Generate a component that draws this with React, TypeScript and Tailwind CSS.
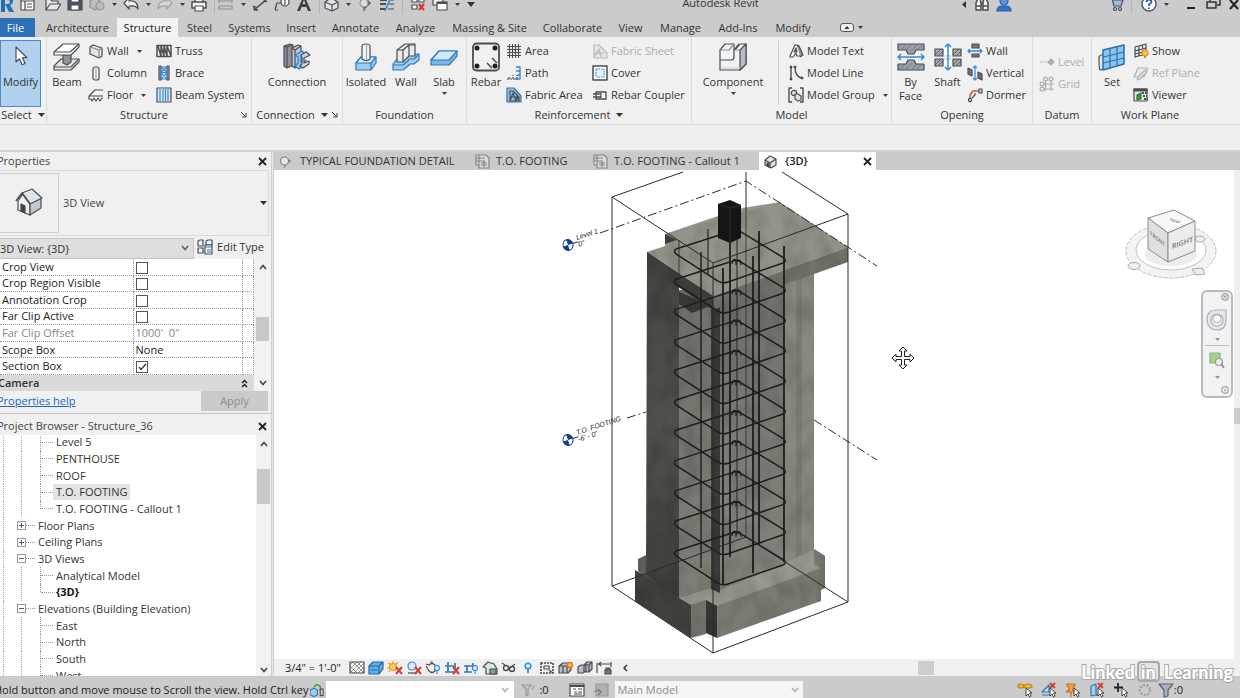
import React, { useState } from 'react';

type IconProps = { w?: number; h?: number; box?: string; children: React.ReactNode };

const Icon: React.FC<IconProps> = ({ w = 16, h = 16, box, children }) => (
  <svg width={w} height={h} viewBox={box ?? `0 0 ${w} ${h}`} fill="none" stroke="#4a4d52" strokeWidth="1.2" strokeLinejoin="round" className="shrink-0" aria-hidden="true">
    {children}
  </svg>
);

const Caret: React.FC<{ className?: string }> = ({ className = '' }) => (
  <svg width="5" height="3" viewBox="0 0 5 3" className={`shrink-0 ${className}`} aria-hidden="true">
    <path d="M0 0h5L2.500 3z" fill="#3c3c3c" />
  </svg>
);

/* ---------- large ribbon icons (30 x 30) ---------- */

const icons = {
  modify: (
    <Icon w={30} h={30}>
      <path d="M10 5v15l3.500-3.200 2.600 6 3-1.300-2.600-5.800h4.500z" fill="#fff" stroke="#44546a" />
    </Icon>
  ),
  beam: (
    <Icon w={30} h={30}>
      <path d="M2 24l7-7h18v3l-8 8H2z" fill="#e4e6ea" />
      <path d="M11 13v8l4 2 4-3v-8z" fill="#8e939b" />
      <path d="M2 10L11 2h16v3l-8 8H2z" fill="#fff" />
      <path d="M2 10h16l9-8M2 25h17l8-8" />
    </Icon>
  ),
  connection: (
    <Icon w={30} h={30}>
      <path d="M2 4l6-2 3 1v20l-6 3-3-2z" fill="#8d929b" />
      <path d="M5 5v20M2 4l3 1 6-2" />
      <path d="M10 6l6-3 3 1v18l-6 4-3-2z" fill="#c5c9d0" />
      <path d="M13 8v18M10 6l3 2 6-4" />
      <path d="M13 13l7-4 4 3-5 3v5l5-2v4l-7 5-4-3 3-3v-6z" fill="#8fc2ef" stroke="#2f7dc8" />
      <path d="M19 13l5-3 4 3-6 3v5l5-2v3l-6 4-3-2 2-2v-6z" fill="#d3d6dc" />
    </Icon>
  ),
  isolated: (
    <Icon w={30} h={30}>
      <path d="M5 21l5-6h15v6l-5 7H5z" fill="#9bcdf0" stroke="#3477b5" />
      <path d="M5 21l5-6h15l-5 6z" fill="#d4ebfb" stroke="#3477b5" />
      <path d="M20 21v7" stroke="#3477b5" />
      <path d="M11 4q0-2 4-2t4 2v13q-4 3-8 0z" fill="#f3f4f6" />
      <path d="M15.500 3v15" stroke="#a2a7ae" />
    </Icon>
  ),
  footWall: (
    <Icon w={30} h={30}>
      <path d="M2 22l4-5h5l9-5h8v6l-5 4h-4l-2 2-5 4H2z" fill="#9bcdf0" stroke="#3477b5" />
      <path d="M2 23h10l5-4 1-2h5l5-5" stroke="#3477b5" />
      <path d="M6 8l8-6h10v12h-6l-6 6H6z" fill="#e9ebee" />
      <path d="M18 3v11M12 7v13M6 8h6l6-5h6" />
    </Icon>
  ),
  slab: (
    <Icon w={30} h={30}>
      <path d="M2 18l8-9h18v5l-8 9H2z" fill="#79b7e6" stroke="#3477b5" />
      <path d="M2 18l8-9h18l-8 9z" fill="#cfe8fa" stroke="#3477b5" />
    </Icon>
  ),
  rebar: (
    <Icon w={30} h={30}>
      <rect x="2" y="1.500" width="26" height="27" rx="3.500" strokeWidth="1.800" />
      <path d="M16 21l5 5M21 16l5 5" strokeWidth="1.500" />
      {[[6, 6], [24, 6], [6, 24], [24, 24]].map(([x, y]) => (
        <circle key={`${x}-${y}`} cx={x} cy={y} r="2.500" fill="#1f1f1f" stroke="none" />
      ))}
    </Icon>
  ),
  component: (
    <Icon w={30} h={30}>
      <path d="M2 8l5-6h9v6l2-1 4-5h6v20l-6 6H2z" fill="#f1f2f6" />
      <path d="M22 8l6-6v20l-6 6z" fill="#b6bbc5" />
      <path d="M2 18h11q3 0 3-3V8L21 2" />
      <path d="M2 8h9l5-6M16 8h6" stroke="#8b909a" />
      <path d="M3 26h19" stroke="#cdd0d8" />
    </Icon>
  ),
  byFace: (
    <Icon w={30} h={30}>
      <path d="M2 2h26v6h-8l-2 4h-6l-2-4H2z" fill="#9aa0a9" />
      <path d="M2 28h26v-6h-8l-2-4h-6l-2 4H2z" fill="#9aa0a9" />
      <path d="M5 8l5-5M10 8l5-5M15 9l6-6M21 8l5-5M4 27l5-5M10 27l6-6M16 27l5-5M21 27l5-5" stroke="#62676f" strokeWidth="0.700" />
      <path d="M2 15h26M5 12l-3 3 3 3M25 12l3 3-3 3" stroke="#2f8de4" strokeWidth="1.500" />
    </Icon>
  ),
  shaft: (
    <Icon w={30} h={30}>
      <rect x="10" y="6" width="10" height="18" fill="#fff" stroke="none" />
      {[[2, 7], [20, 7], [2, 17], [20, 17]].map(([x, y]) => (
        <g key={`${x}-${y}`}>
          <rect x={x} y={y} width="8" height="7" fill="#a4a9b1" />
          <path d={`M${x} ${y + 6}l6-6M${x + 3} ${y + 7}l5-5`} strokeWidth="0.700" />
        </g>
      ))}
      <path d="M10 14h10M10 17h10" stroke="#9aa0a9" strokeDasharray="2 1" />
      <path d="M15 2v26M12 5l3-3 3 3M12 25l3 3 3-3" stroke="#2f8de4" strokeWidth="1.500" />
    </Icon>
  ),
  set: (
    <Icon w={30} h={30}>
      <path d="M2 15q1-3 5-2v14l-4 1q-1-1-1-13z" fill="#e5e7ea" />
      <path d="M6 8l21-5v19L6 28z" fill="#8cc5ee" stroke="#2f6ea8" strokeWidth="1.500" />
      <path d="M13 6.500V26M20 4.800V24M6 15l21-5M6 21l21-5" stroke="#2f6ea8" />
    </Icon>
  ),
  house: (
    <Icon w={30} h={30}>
      <path d="M4 13l5-7 7 8v13L4 22z" fill="#eceef0" />
      <path d="M16 15l11-5v10l-11 7z" fill="#c3c8cf" />
      <path d="M8 5l10-4 10 9-12 6z" fill="#dfe4ea" />
      <path d="M8 5l-6 8M8 5l8 11" strokeWidth="1.700" />
      <path d="M7 16l4 2v7l-4-2z" fill="#3a4046" />
    </Icon>
  ),
};

/* ---------- small ribbon icons (16 x 16) ---------- */

const small = {
  wall: <Icon><path d="M2 4l3-2 9 3v8l-3 2-9-4z" fill="#e4e6ea" /><path d="M2 4l9 3v8M11 7l3-2" stroke="#858a92" /></Icon>,
  column: <Icon><rect x="5" y="2" width="6" height="13" rx="2" fill="#f6f7f8" /><path d="M8 3v11" stroke="#9ea3ab" /></Icon>,
  floor: <Icon><path d="M1 9l6-6h8M1 9v3h2l1 2 2-3 2 3 2-3 2 3 2-3h1M1 9h14" fill="#fafafa" /></Icon>,
  truss: <Icon><path d="M1 2.500h14M1 13.500h14M1 2v12M15 2v12M2 3l3 10V3l3 10V3l3 10V3l4 10" strokeWidth="1.500" /></Icon>,
  brace: <Icon><path d="M3 1h2v14H3zM11 1h2v14h-2z" fill="#9fb8cf" /><path d="M5 2l6 5-6 1 6 6M11 2L5 7l6 1-6 6M5 7.500h6M5 14h6M5 2h6" stroke="#2f8de4" /></Icon>,
  beamSystem: <Icon><rect x="1" y="1" width="14" height="14" fill="#d8ebfa" /><path d="M4 2v12M7 2v12M9.500 2v12M12 2v12" stroke="#3c87ca" /></Icon>,
  area: <Icon><path d="M3.500 1v14M6.500 1v14M9.500 1v14M12.500 1v14M1 3.500h14M1 6.500h14M1 9.500h14M1 12.500h14" strokeWidth="1.100" /></Icon>,
  path: <Icon><path d="M1 14h11M3 14v-3M7 14v-4M11 14v-4" strokeDasharray="2 1" /><path d="M9 14h5V2h-4M14 6h-4M14 10h-3" stroke="#3c87ca" strokeWidth="1.400" /></Icon>,
  fabricArea: <Icon><path d="M1 1h7l7 8v6H1z" fill="#8fc0ea" stroke="#3477b5" /><path d="M4 4h3l6 6v4H4zM4 14l3-8 3 8 1-5 2 5M5 10h7" /></Icon>,
  fabricSheet: <Icon><path d="M2 2h5l8 8v5H2zM2 14l5-8 2 8M3 10h10" stroke="#b9b9b9" fill="#e4e4e4" /></Icon>,
  cover: <Icon><rect x="1" y="1" width="14" height="14" fill="#fff" strokeWidth="1.500" /><rect x="4" y="4" width="8" height="8" fill="#e6f2fc" stroke="#2f8de4" strokeDasharray="1.500 1" /></Icon>,
  coupler: <Icon><path d="M4 5h10v7H4z" fill="#fff" strokeWidth="1.300" /><path d="M1 7h8M1 10h8" strokeWidth="1.500" /><path d="M9 6v5" /></Icon>,
  modelText: <Icon><path d="M2 13L7 2h2l5 9-2 2h-3l-1-3-3 4H2z" fill="#fff" /><path d="M6 9l2-4 1 4zM9 2l2 1 4 9-3 2" fill="#7d9a91" /></Icon>,
  modelLine: <Icon><path d="M3 2v12M7 2q0 10 7 11" strokeWidth="1.400" /><path d="M2 1h2v2H2zM2 13h2v2H2zM6 1h2v2H6zM13 12h2v2h-2z" fill="#4a4d52" strokeWidth="0.600" /></Icon>,
  modelGroup: <Icon><path d="M4 1H1v14h3M12 1h3v14h-3" strokeWidth="1.400" /><circle cx="6" cy="6" r="2.700" fill="#dfe2e6" /><path d="M7 7h3l3 2v4l-3 1-3-2z" fill="#dfe2e6" /></Icon>,
  openWall: <Icon><path d="M5 1h7v4H5zM5 11h7v3H5z" fill="#72777f" /><path d="M1 8h14M3 6L1 8l2 2M13 6l2 2-2 2" stroke="#2f8de4" strokeWidth="1.300" /></Icon>,
  vertical: <Icon><path d="M1 3l4 2v6L1 9zM11 7l4 2v6l-4-2z" fill="#6e737b" /><path d="M8 1v14M6 3l2-2 2 2M6 13l2 2 2-2" stroke="#2f8de4" strokeWidth="1.200" /></Icon>,
  dormer: <Icon><path d="M3 12V8l3-4h7" stroke="#d9533b" strokeWidth="1.500" /><circle cx="3" cy="13" r="1.600" fill="#ddd" /><path d="M12 2h3v4h-3zM5 11l3-3V6" fill="#ddd" /></Icon>,
  level: <Icon><path d="M1 8h2M4 8h1M6 8h2" stroke="#adadad" /><path d="M9 8l3-3 3 3-3 3z" fill="#adadad" stroke="#adadad" /></Icon>,
  grid: <Icon><g stroke="#adadad"><circle cx="6.500" cy="3" r="1.900" /><circle cx="12" cy="3" r="1.900" /><circle cx="3" cy="8" r="1.900" /><circle cx="3" cy="13" r="1.900" /><path d="M6.500 5v10M12 5v10M5 8h10M5 13h10" /></g></Icon>,
  show: <Icon><path d="M2 4l11-3v10L2 14zM6 3v10M9.500 2v9M2 8l11-3M2 11l8-2" /><circle cx="12" cy="10" r="3" fill="#ffc247" stroke="#e59318" /><path d="M11 14h2" /></Icon>,
  refPlane: <Icon><path d="M5 3h10l-4 9H1z" stroke="#b4b4b4" fill="#ececec" /><path d="M5 12l7-7 2 2-7 7-3 1z" stroke="#b4b4b4" fill="#dedede" /></Icon>,
  viewer: <Icon><path d="M1 2h13v12H1z" fill="#e8ece9" /><path d="M1 2h13v2H1z" fill="#4a4d52" /><path d="M4 8l4-2v6l-4 1z" fill="#3f9b46" stroke="#2c6d33" /><path d="M9 6h5M10 9h4M11 12h4" strokeDasharray="2 1" strokeWidth="2" /></Icon>,
};

/* ---------- ribbon building blocks ---------- */

const LargeButton: React.FC<{ icon: React.ReactNode; label: string; className: string; caret?: boolean }> = ({ icon, label, className, caret }) => (
  <button className={`flex shrink-0 flex-col items-center pt-[5px] leading-[14px] ${className}`}>
    {icon}
    <span className="mt-[3px] text-center">{label}</span>
    {caret && <Caret className="mt-[3px]" />}
  </button>
);

const SmallButton: React.FC<{ icon: React.ReactNode; label: string; caret?: boolean; disabled?: boolean }> = ({ icon, label, caret, disabled }) => (
  <button disabled={disabled} className="flex h-[22px] items-center whitespace-nowrap disabled:text-[#adadad]">
    <span className="flex w-[18px] justify-center">{icon}</span>
    <span className="ml-[2px]">{label}</span>
    {caret && <Caret className="ml-2" />}
  </button>
);

const Panel: React.FC<{ title: string; className: string; caret?: boolean; launcher?: boolean; children: React.ReactNode }> = ({ title, className, caret, launcher, children }) => (
  <section className={`flex shrink-0 flex-col border-r border-[#dcdcdc] last:border-r-0 ${className}`}>
    <div className="flex h-[70px] items-start">{children}</div>
    <div className="flex flex-1 items-center pb-px">
      <h2 className="flex flex-1 items-center justify-center gap-[6px] whitespace-nowrap">
        {title}
        {caret && <svg width="7" height="4" viewBox="0 0 7 4" aria-hidden="true"><path d="M0 0h7L3.500 4z" fill="#333" /></svg>}
      </h2>
      {launcher && (
        <button aria-label={`${title} settings`} className="pr-[4px]">
          <svg width="6" height="6" viewBox="0 0 6 6" fill="none" stroke="#444" aria-hidden="true"><path d="M0 0l5 5M5 1v4H1" /></svg>
        </button>
      )}
    </div>
  </section>
);

const Column: React.FC<{ className?: string; children: React.ReactNode }> = ({ className = '', children }) => (
  <div className={`flex shrink-0 flex-col pt-[3px] ${className}`}>{children}</div>
);

const Ribbon = () => (
  <div className="flex h-[88px] shrink-0 overflow-hidden border-b border-[#dadada] bg-[#f0f0f0]">
    <Panel title="Select" className="w-[47px]" caret>
      <button className="mt-[3px] flex h-[67px] w-[41px] flex-col items-center border border-[#4c8ccb] bg-[#b2d1ee] pt-px">
        {icons.modify}
        <span className="mt-[3px] leading-[14px]">Modify</span>
      </button>
    </Panel>
    <Panel title="Structure" className="w-[205px]" launcher>
      <LargeButton icon={icons.beam} label="Beam" className="w-[40px]" />
      <Column className="w-[68px]">
        <SmallButton icon={small.wall} label="Wall" caret />
        <SmallButton icon={small.column} label="Column" />
        <SmallButton icon={small.floor} label="Floor" caret />
      </Column>
      <Column>
        <SmallButton icon={small.truss} label="Truss" />
        <SmallButton icon={small.brace} label="Brace" />
        <SmallButton icon={small.beamSystem} label="Beam System" />
      </Column>
    </Panel>
    <Panel title="Connection" className="w-[91px]" caret launcher>
      <LargeButton icon={icons.connection} label="Connection" className="w-full" />
    </Panel>
    <Panel title="Foundation" className="w-[124px]">
      <LargeButton icon={icons.isolated} label="Isolated" className="w-[46px]" />
      <LargeButton icon={icons.footWall} label="Wall" className="w-[34px]" />
      <LargeButton icon={icons.slab} label="Slab" className="w-[42px]" caret />
    </Panel>
    <Panel title="Reinforcement" className="w-[225px]" caret>
      <LargeButton icon={icons.rebar} label="Rebar" className="w-[38px]" />
      <Column className="w-[86px]">
        <SmallButton icon={small.area} label="Area" />
        <SmallButton icon={small.path} label="Path" />
        <SmallButton icon={small.fabricArea} label="Fabric Area" />
      </Column>
      <Column>
        <SmallButton icon={small.fabricSheet} label="Fabric Sheet" disabled />
        <SmallButton icon={small.cover} label="Cover" />
        <SmallButton icon={small.coupler} label="Rebar Coupler" />
      </Column>
    </Panel>
    <Panel title="Model" className="w-[200px]">
      <LargeButton icon={icons.component} label="Component" className="w-[82px]" caret />
      <div className="mt-1 ml-1 h-[64px] w-px bg-[#d0d0d0]" />
      <Column className="pl-2">
        <SmallButton icon={small.modelText} label="Model Text" />
        <SmallButton icon={small.modelLine} label="Model Line" />
        <SmallButton icon={small.modelGroup} label="Model Group" caret />
      </Column>
    </Panel>
    <Panel title="Opening" className="w-[141px]">
      <LargeButton icon={icons.byFace} label="By Face" className="w-[37px]" />
      <LargeButton icon={icons.shaft} label="Shaft" className="w-[37px]" />
      <Column>
        <SmallButton icon={small.openWall} label="Wall" />
        <SmallButton icon={small.vertical} label="Vertical" />
        <SmallButton icon={small.dormer} label="Dormer" />
      </Column>
    </Panel>
    <Panel title="Datum" className="w-[59px]">
      <div className="flex flex-col pt-[14px] pl-[5px]">
        <SmallButton icon={small.level} label="Level" disabled />
        <SmallButton icon={small.grid} label="Grid" disabled />
      </div>
    </Panel>
    <Panel title="Work Plane" className="w-[116px]">
      <LargeButton icon={icons.set} label="Set" className="w-[40px]" />
      <Column>
        <SmallButton icon={small.show} label="Show" />
        <SmallButton icon={small.refPlane} label="Ref Plane" disabled />
        <SmallButton icon={small.viewer} label="Viewer" />
      </Column>
    </Panel>
  </div>
);

/* ---------- title bar ---------- */

const Tool: React.FC<{ label: string; className?: string; children: React.ReactNode }> = ({ label, className = 'w-[22px]', children }) => (
  <button aria-label={label} className={`flex h-6 shrink-0 items-center justify-center ${className}`}>{children}</button>
);

const ToolCaret = () => <span className="flex w-[12px] shrink-0 justify-center"><Caret /></span>;
const ToolSep = () => <span className="h-5 w-px shrink-0 bg-[#b5b5b5]" />;

const TitleBar = () => (
  <header className="h-[18px] shrink-0 overflow-hidden">
    <div className="-mt-2 flex h-6 items-center">
      <Tool label="Revit" className="w-[16px]"><Icon w={14} h={18}><path d="M0 1h7q5 0 5 5 0 3-3 4l4 7H8L4 9h3q2 0 2-2t-2-2H4v12H0z" fill="#1f6fb8" stroke="none" /></Icon></Tool>
      <Tool label="Recent files"><Icon><rect x="2" y="2" width="13" height="12" fill="#fafafa" /><path d="M2 5h13M6 5v9M8 8h5M8 11h5" /></Icon></Tool>
      <Tool label="Open" className="ml-1 w-[22px]"><Icon><path d="M1 14V3h4l2 2h6v3M1 14l4-6h11l-4 6z" fill="#e3e6ea" /></Icon></Tool>
      <Tool label="Save"><Icon><path d="M1 2h14v12H1z" fill="#4a5563" /><path d="M4 9h8v5H4zM4 2h8v4H4z" fill="#fff" /></Icon></Tool>
      <Tool label="Synchronize"><Icon><g stroke="#929292" fill="#bdbdbd"><path d="M1 5l5-3 5 3v6l-5 3-5-3z" /><circle cx="11" cy="10" r="4" /></g></Icon></Tool>
      <ToolCaret />
      <Tool label="Undo"><Icon><path d="M1 7l5-5v3q9-1 9 8-2-4-9-3v3z" fill="#f3f3f3" /></Icon></Tool>
      <ToolCaret />
      <Tool label="Redo"><Icon><path d="M15 7l-5-5v3q-9-1-9 8 2-4 9-3v3z" fill="#d6d6d6" stroke="#a0a0a0" /></Icon></Tool>
      <ToolCaret />
      <Tool label="Print"><Icon><path d="M4 6V1h8v5M1 6h14v6H1z" fill="#f6f6f6" strokeWidth="1.500" /><path d="M4 10h8v5H4z" fill="#fff" /></Icon></Tool>
      <span className="w-1" /><ToolSep />
      <Tool label="Measure"><Icon><path d="M1 5h13M1 10h13v3H1zM1 3v4M14 3v4" stroke="#8e8e8e" /></Icon></Tool>
      <ToolCaret />
      <Tool label="Aligned dimension"><Icon><path d="M2 14L14 4M1 10l4 4M10 2l5 4M2 14l1-4M2 14h4" strokeWidth="1.600" /></Icon></Tool>
      <Tool label="Tag by category"><Icon><path d="M1 14l2-7h5M1 14h3" /><circle cx="11" cy="6" r="4" fill="#fff" /><path d="M11 4v5" /></Icon></Tool>
      <Tool label="Text"><Icon><path d="M1 15L7 1h2l6 14h-3l-1.500-4h-5L4 15zM6.500 8h3L8 4z" fill="#3d4148" stroke="none" /></Icon></Tool>
      <span className="w-1" /><ToolSep />
      <Tool label="Default 3D view" className="w-[22px]"><Icon><path d="M2 6l6-4 7 4v6l-6 3-7-3zM2 6l7 3v6M9 9l6-3" fill="#dfe3e8" /></Icon></Tool>
      <ToolCaret />
      <Tool label="Section"><Icon><path d="M8 2l5 5-5 5z" fill="#8e939b" /><circle cx="7" cy="7" r="4" fill="#dcdcdc" stroke="#8e939b" /><path d="M7 11v4" /></Icon></Tool>
      <Tool label="Thin lines"><Icon><path d="M1 4h7M1 8h6M1 13h6" strokeWidth="2" /><path d="M10 4h5M9 8h6M9 13h6" /><path d="M12 1L6 15" stroke="#2f8de4" strokeWidth="1.500" /></Icon></Tool>
      <span className="w-1" /><ToolSep />
      <Tool label="Close inactive views" className="ml-1 w-[22px]"><Icon><path d="M2 2h5v4H2zM9 2h5v4H9zM2 9h5v4H2z" fill="#fff" /><path d="M9 8l5 6M14 8l-5 6" stroke="#d0342c" strokeWidth="2" /></Icon></Tool>
      <Tool label="Switch windows"><Icon><path d="M1 1h10v8H1z" fill="#eee" /><path d="M5 6h10v8H5z" fill="#fff" /><path d="M5 7h10" strokeWidth="2" /></Icon></Tool>
      <ToolCaret />
      <span className="ml-1 flex"><svg width="8" height="5" viewBox="0 0 8 5" aria-hidden="true"><path d="M0 0h8L4 5z" fill="#333" /></svg></span>
      <h1 className="flex-1 pb-[2px] pl-1 text-center">Autodesk Revit</h1>
      <svg width="4" height="7" viewBox="0 0 4 7" className="mr-[5px] shrink-0" aria-hidden="true"><path d="M4 0v7L0 3.500z" fill="#333" /></svg>
      <Tool label="Search"><Icon><path d="M2 14V7l2-5h2l1 5v7zM9 14V7l1-5h2l2 5v7zM7 7h2M2 10h5M9 10h5" fill="#f4f4f4" strokeWidth="1.500" /></Icon></Tool>
      <Tool label="Sign in"><Icon><circle cx="8" cy="5" r="4" fill="#5b95dd" stroke="#2a5aa3" /><path d="M1 15q0-5 5-5h4q5 0 5 5z" fill="#2f74cc" stroke="#2a5aa3" /></Icon></Tool>
      <Tool label="App store" className="ml-[90px] w-[22px]"><Icon><path d="M1 2h3l2 8h7l2-6H5" fill="#a9b9d3" stroke="#3f5474" /><circle cx="7" cy="13" r="1.500" /><circle cx="12" cy="13" r="1.500" /></Icon></Tool>
      <span className="w-1" /><ToolSep />
      <Tool label="Help" className="ml-[6px] w-[22px]"><Icon><circle cx="8" cy="8" r="7" fill="#fff" stroke="#4f5e78" strokeWidth="1.500" /><path d="M5.500 6q0-2.500 2.500-2.500T10.500 6Q10.500 7 8 8.500V10M8 11.500v1.500" stroke="#245bb5" strokeWidth="1.800" /></Icon></Tool>
      <ToolCaret />
      <Tool label="Minimize" className="ml-2 w-[22px]"><Icon><path d="M4 12h8" stroke="#222" strokeWidth="2" /></Icon></Tool>
      <Tool label="Restore"><Icon><path d="M5 5V3h10v6h-3M2 6h9v6H2z" stroke="#333" strokeWidth="1.500" /></Icon></Tool>
      <Tool label="Close" className="-mr-[4px] w-[20px]"><Icon w={12}><path d="M2 4l8 9M10 4l-8 9" stroke="#222" strokeWidth="2" /></Icon></Tool>
    </div>
  </header>
);

const tabs = [
  { label: 'Architecture', width: 'w-[79px]' },
  { label: 'Structure', width: 'w-[61px]' },
  { label: 'Steel', width: 'w-[43px]' },
  { label: 'Systems', width: 'w-[57px]' },
  { label: 'Insert', width: 'w-[46px]' },
  { label: 'Annotate', width: 'w-[63px]' },
  { label: 'Analyze', width: 'w-[57px]' },
  { label: 'Massing & Site', width: 'w-[91px]' },
  { label: 'Collaborate', width: 'w-[75px]' },
  { label: 'View', width: 'w-[41px]' },
  { label: 'Manage', width: 'w-[59px]' },
  { label: 'Add-Ins', width: 'w-[56px]' },
  { label: 'Modify', width: 'w-[54px]' },
];

const RibbonTabs = () => {
  const [active, setActive] = useState('Structure');
  return (
    <nav className="flex h-[19px] shrink-0 items-stretch">
      <button className="mr-[3px] w-[35px] shrink-0 bg-[#2a71b8] pr-1 text-white">File</button>
      {tabs.map((tab) => (
        <button
          key={tab.label}
          onClick={() => setActive(tab.label)}
          className={`shrink-0 whitespace-nowrap ${tab.width} ${active === tab.label ? 'bg-[#f3f3f3] text-[#222]' : ''}`}
        >
          {tab.label}
        </button>
      ))}
      <button aria-label="Minimize ribbon" className="ml-5 flex items-center gap-1">
        <svg width="14" height="9" viewBox="0 0 14 9" aria-hidden="true"><rect x="0.500" y="0.500" width="13" height="8" rx="2.500" fill="#eee" stroke="#555" /><path d="M4.500 6L7 3l2.500 3z" fill="#333" /></svg>
        <Caret />
      </button>
    </nav>
  );
};

/* ---------- left palettes ---------- */

const CloseX = () => (
  <svg width="9" height="9" viewBox="0 0 9 9" stroke="#222" strokeWidth="1.800" aria-hidden="true"><path d="M1 1l7 7M8 1L1 8" /></svg>
);

const Chevron: React.FC<{ up?: boolean }> = ({ up }) => (
  <svg width="8" height="6" viewBox="0 0 8 6" fill="none" stroke="#444" strokeWidth="1.600" aria-hidden="true">
    <path d={up ? 'M1 5l3-3.500L7 5' : 'M1 1l3 3.500L7 1'} />
  </svg>
);

const PaletteHeader: React.FC<{ title: string }> = ({ title }) => (
  <div className="flex h-[18px] shrink-0 items-center justify-between pr-1">
    <h2 className="-ml-[3px] text-[#444]">{title}</h2>
    <button aria-label={`Close ${title}`}><CloseX /></button>
  </div>
);

const properties = [
  { name: 'Crop View', checked: false },
  { name: 'Crop Region Visible', checked: false },
  { name: 'Annotation Crop', checked: false },
  { name: 'Far Clip Active', checked: false },
  { name: 'Far Clip Offset', value: "1000'  0\"", muted: true },
  { name: 'Scope Box', value: 'None' },
  { name: 'Section Box', checked: true },
];

const PropertyCheck: React.FC<{ label: string; initial: boolean }> = ({ label, initial }) => {
  const [on, setOn] = useState(initial);
  return (
    <span className="relative mt-[2px] block h-[12px] w-[12px]">
      <input type="checkbox" aria-label={label} checked={on} onChange={() => setOn(!on)} className="block h-full w-full appearance-none border border-[#555] bg-white" />
      {on && <svg viewBox="0 0 12 12" className="pointer-events-none absolute inset-0" fill="none" stroke="#333" strokeWidth="1.300" aria-hidden="true"><path d="M3 6l2 2.500L10 3" /></svg>}
    </span>
  );
};

const Properties = () => (
  <section className="flex shrink-0 flex-col">
    <PaletteHeader title="Properties" />
    <button className="mr-[2px] flex h-[66px] items-center border border-l-0 border-[#d9d9d9] text-left">
      <span className="flex h-[60px] w-[59px] items-center justify-center border border-l-0 border-[#d0d0d0]">{icons.house}</span>
      <span className="ml-1 flex-1 text-[#444]">3D View</span>
      <svg width="7" height="4" viewBox="0 0 7 4" className="mr-px" aria-hidden="true"><path d="M0 0h7L3.500 4z" fill="#333" /></svg>
    </button>
    <div className="flex h-[23px] items-end">
      <div className="relative">
        <select aria-label="Selection filter" className="h-[21px] w-[194px] appearance-none border border-l-0 border-[#c4c4c4] bg-[#dedede]">
          <option>3D View: {'{3D}'}</option>
        </select>
        <span className="pointer-events-none absolute top-[7px] right-[5px] opacity-80"><Chevron /></span>
      </div>
      <button className="flex h-[23px] flex-1 items-center justify-center gap-1 pr-1 pb-[2px] whitespace-nowrap">
        <Icon><path d="M1 2l2-1h3v6H1zM9 2l2-1h4v5H9zM1 9h5v5H1z" /><path d="M8 6h7v9H8z" fill="#fff" /><path d="M8 8h7M10 11h4M10 13h4" stroke="#2f74cc" /></Icon>
        Edit Type
      </button>
    </div>
    <div className="flex h-[132px]">
      <div className="flex flex-1 flex-col bg-white">
        <table className="h-[116px] w-full table-fixed border-collapse text-[#222]">
          <colgroup>
            <col className="w-[133px]" />
            <col />
            <col className="w-[11px]" />
          </colgroup>
          <tbody>
            {properties.map((p) => (
              <tr key={p.name} className={p.muted ? 'text-[#8a8a8a]' : ''}>
                <td className="border-r border-b border-dotted border-[#999] p-0 pl-[2px] leading-[14px] whitespace-nowrap">{p.name}</td>
                <td className="border-r border-b border-dotted border-[#999] p-0 pl-[2px] leading-[14px] whitespace-pre">
                  {p.value ?? <PropertyCheck label={p.name} initial={!!p.checked} />}
                </td>
                <td className="border-r border-b border-dotted border-[#999] p-0" />
              </tr>
            ))}
          </tbody>
        </table>
        <button className="flex flex-1 items-center justify-between bg-[#dadada] pr-[6px] text-left leading-[14px] font-semibold">
          <span className="-ml-[2px]">Camera</span>
          <svg width="7" height="9" viewBox="0 0 7 9" fill="none" stroke="#222" strokeWidth="1.500" aria-hidden="true"><path d="M1 4l2.500-2.500L6 4M1 8l2.500-2.500L6 8" /></svg>
        </button>
      </div>
      <div className="flex w-[17px] flex-col items-center bg-[#f2f2f2] py-[5px]">
        <Chevron up />
        <span className="mt-[47px] mb-auto h-[24px] w-[13px] bg-[#c8c8c8]" />
        <Chevron />
      </div>
    </div>
    <div className="flex h-[22px] items-start justify-between pr-[3px]">
      <a href="#help" className="-ml-[3px] pt-[2px] text-[#1b66c0] underline">Properties help</a>
      <button disabled className="h-[20px] w-[67px] bg-[#cacaca] text-[#8d8d8d]">Apply</button>
    </div>
  </section>
);

type Node = { label: string; depth: 1 | 2; state?: 'open' | 'closed'; last?: boolean; selected?: boolean; bold?: boolean };

const tree: Node[] = [
  { label: 'Level 5', depth: 2 },
  { label: 'PENTHOUSE', depth: 2 },
  { label: 'ROOF', depth: 2 },
  { label: 'T.O. FOOTING', depth: 2, selected: true },
  { label: 'T.O. FOOTING - Callout 1', depth: 2, last: true },
  { label: 'Floor Plans', depth: 1, state: 'closed' },
  { label: 'Ceiling Plans', depth: 1, state: 'closed' },
  { label: '3D Views', depth: 1, state: 'open' },
  { label: 'Analytical Model', depth: 2 },
  { label: '{3D}', depth: 2, last: true, bold: true },
  { label: 'Elevations (Building Elevation)', depth: 1, state: 'open' },
  { label: 'East', depth: 2 },
  { label: 'North', depth: 2 },
  { label: 'South', depth: 2 },
  { label: 'West', depth: 2 },
];

const TreeRow: React.FC<{ node: Node }> = ({ node }) => (
  <li className="flex items-center pl-[3px] whitespace-nowrap">
    <span className="h-full w-[14px] shrink-0 border-l border-dotted border-[#aaa]" />
    {node.depth === 1 ? (
      <>
        <button aria-label={`Toggle ${node.label}`} className="flex h-[9px] w-[9px] shrink-0 items-center justify-center border border-[#999] bg-white">
          <svg width="5" height="5" viewBox="0 0 5 5" stroke="#3b5ea0" aria-hidden="true"><path d={node.state === 'closed' ? 'M0 2.500h5M2.500 0v5' : 'M0 2.500h5'} /></svg>
        </button>
        <span className="w-[9px] shrink-0 border-t border-dotted border-[#999]" />
      </>
    ) : (
      <>
        <span className="ml-[4px] h-full w-[19px] shrink-0 border-l border-dotted border-[#aaa]" />
        <span className={`w-px shrink-0 border-l border-dotted border-[#999] ${node.last ? 'h-1/2 self-start' : 'h-full'}`} />
        <span className="w-[12px] shrink-0 border-t border-dotted border-[#999]" />
      </>
    )}
    <span className={`px-[3px] leading-[16px] ${node.selected ? 'bg-[#e3e3e3]' : ''} ${node.bold ? 'font-bold text-[#111]' : ''}`}>{node.label}</span>
  </li>
);

const ProjectBrowser = () => (
  <section className="flex min-h-0 flex-1 flex-col border-t border-[#c4c4c4] pt-[3px]">
    <PaletteHeader title="Project Browser - Structure_36" />
    <div className="flex min-h-0 flex-1 bg-white">
      <div className="min-w-0 flex-1 overflow-hidden">
        <ul className="-mt-px grid h-[250px] grid-rows-[repeat(15,minmax(0,1fr))]">
          {tree.map((node) => <TreeRow key={node.label} node={node} />)}
        </ul>
      </div>
      <div className="flex w-[15px] flex-col items-center bg-[#f2f2f2] pt-[6px] pb-[3px]">
        <Chevron up />
        <span className="mt-[22px] mb-auto h-[35px] w-[13px] bg-[#c8c8c8]" />
        <Chevron />
      </div>
    </div>
  </section>
);

/* ---------- drawing area ---------- */

const sheetIcon = <Icon w={15} h={15}><g stroke="#858585"><path d="M1 1h10l3 3v10H4V11H1z" fill="#dcdcdc" /><path d="M1 4h9M1 7h9M4 1v10M6 9h6M6 11h6M9 7v6" /></g></Icon>;

const ViewTabs = () => (
  <div className="flex h-[18px] shrink-0 items-stretch bg-[#cacaca]">
    <button className="flex w-[198px] items-center gap-[7px] pl-[4px]">
      <Icon w={15} h={14}><path d="M7 2l6 5-6 5z" fill="#777" stroke="none" /><circle cx="6.500" cy="7" r="4" fill="#e5e5e5" stroke="#8a8a8a" /><path d="M6.500 11v3" stroke="#8a8a8a" /></Icon>
      TYPICAL FOUNDATION DETAIL
    </button>
    <button className="flex w-[118px] items-center gap-[6px] pl-[3px]">{sheetIcon}T.O. FOOTING</button>
    <button className="flex w-[169px] items-center gap-[6px] pl-[3px]">{sheetIcon}T.O. FOOTING - Callout 1</button>
    <div className="flex w-[117px] items-center bg-white pr-1 pl-[4px] text-[#222]">
      <button className="flex flex-1 items-center gap-[7px]">
        <Icon w={15} h={15}><path d="M2 6l5-4 6 3v6l-5 3-6-3z" fill="#dfe3e8" /><path d="M2 6l5 3 6-4M7 9v5" /><path d="M4 9l2 1v3l-2-1z" fill="#333" /></Icon>
        <span className="font-semibold">{'{3D}'}</span>
      </button>
      <button aria-label="Close view"><CloseX /></button>
    </div>
  </div>
);

const loops = Array.from({ length: 11 }, (_, i) => i * 30.2);

const bars = [
  { x: 701, y1: 252, y2: 568, w: 1.4 },
  { x: 708, y1: 229, y2: 275, w: 1.1 },
  { x: 723, y1: 268, y2: 585, w: 1.8 },
  { x: 730, y1: 242, y2: 557, w: 1.8 },
  { x: 737, y1: 240, y2: 535, w: 0.9 },
  { x: 753, y1: 256, y2: 573, w: 1.8 },
  { x: 759, y1: 231, y2: 545, w: 1.8 },
  { x: 784, y1: 246, y2: 562, w: 1.8 },
];

const LevelMark: React.FC<{ y: number; name: string; elevation: string }> = ({ y, name, elevation }) => (
  <g transform={`translate(568 ${y})`}>
    <g transform="rotate(-18)">
      <ellipse rx="5" ry="5.500" fill="#fff" stroke="#123f94" />
      <path d="M0-5.500A5 5.500 0 0 1 5 0H0zM0 5.500A5 5.500 0 0 1-5 0H0z" fill="#123f94" />
      <path d="M5 0h6" stroke="#222" />
      <text x="10" y="-2" fontSize="7" fill="#222" className="font-['Liberation_Sans',sans-serif] italic">{name}</text>
      <text x="10" y="5" fontSize="7" fill="#222" className="font-['Liberation_Sans',sans-serif] italic">{elevation}</text>
    </g>
  </g>
);

const Model = () => (
  <svg viewBox="274 170 960 489" className="h-full w-full" fill="none" role="img" aria-label="3D view of the column footing">
    <defs>
      <linearGradient id="side" x1="0" y1="0" x2="0" y2="1">
        <stop offset="0" stopColor="#434340" />
        <stop offset="0.500" stopColor="#50514c" />
        <stop offset="1" stopColor="#3e3f3b" />
      </linearGradient>
      <linearGradient id="inner" x1="0" y1="0" x2="0" y2="1">
        <stop offset="0" stopColor="#70726b" />
        <stop offset="1" stopColor="#7f8178" />
      </linearGradient>
      <linearGradient id="front" x1="0" y1="0" x2="0" y2="1">
        <stop offset="0" stopColor="#6b6d66" />
        <stop offset="0.500" stopColor="#7b7d75" />
        <stop offset="1" stopColor="#83857c" />
      </linearGradient>
      <filter id="grain" x="0" y="0" width="100%" height="100%">
        <feTurbulence type="fractalNoise" baseFrequency="0.060 0.040" numOctaves="2" seed="4" />
        <feColorMatrix values="0 0 0 0 0  0 0 0 0 0  0 0 0 0 0  1.400 0 0 0 -0.500" />
      </filter>
      <clipPath id="solid">
        <path d="M647 252l18-6v-12l115-32 68 45v15l-34 12v275l11 7v32l-4 2v11l-104 37-27 0-55-37v-31l11-6z" />
      </clipPath>
    </defs>

    {/* column shaft */}
    <path d="M647 252l32 22v326l-33-24z" fill="url(#side)" />
    <path d="M679 290h34v320h-34z" fill="url(#inner)" />
    <path d="M713 296l101-36v320l-101 30z" fill="url(#front)" />
    <path d="M784 270l30-11v300l-30 16z" fill="#888a81" />
    <path d="M796 266l6-2v300h-6z" fill="#74766d" opacity="0.600" />
    <path d="M711 300h9v293l-9-4z" fill="#3b3c39" />

    {/* footing */}
    <path d="M638 559l8-4v22l-8-6z" fill="#5d5e57" />
    <path d="M635 570l11 6 33 22 12 7v33l-56-37z" fill="#40413d" />
    <path d="M720 590l64-26 30-15 11 7-4 14-104 36-11-6-15 5-12-7 32-10z" fill="#96988e" />
    <path d="M814 549l11 7v32l-4 2v-22l-7-4z" fill="#7a7c73" />
    <path d="M711 560h9v33l-9-4z" fill="#3b3c39" />
    <path d="M691 605l15-5v34l-15 4z" fill="#72746b" />
    <path d="M706 600l11 6v32l-11-5z" fill="#363733" />
    <path d="M717 606l104-38v33l-104 37z" fill="#7a7c73" />

    {/* slab on top */}
    <path d="M665 234l53-18 25-8 37-6 68 45-135 49-66-44 18-6z" fill="#929489" />
    <path d="M665 234v10l12-4z" fill="#3f403c" />
    <path d="M647 252l66 44v14l-66-44z" fill="#40403d" />
    <path d="M713 296l135-49v15l-34 12-101 36z" fill="#72746b" />
    <path d="M679 292l34 14v-1l-21 8-13-9z" fill="#3a3b37" />
    <rect x="630" y="200" width="220" height="440" clipPath="url(#solid)" filter="url(#grain)" opacity="0.200" />

    {/* reinforcement */}
    <g stroke="#1d1e1c">
      {bars.map((b) => <path key={b.x} d={`M${b.x} ${b.y1}V${b.y2}`} strokeWidth={b.w} />)}
      {loops.map((dy, i) => (
        <g key={dy} transform={`translate(0 ${dy})`}>
          <path d="M676 249l56-18q5-2 9 1l43 26q3 3-1 5l-55 19q-6 2-10-1l-42-27q-3-3 0-5z" strokeWidth="1.500" />
          {i < 10 && <path d="M732 264q1-6 4-4v5M737 260q4-1 4 5" strokeWidth="1.300" />}
        </g>
      ))}
    </g>
    <path d="M718 204l12-4 11 5v33l-11 5-12-5z" fill="#151515" />
    <path d="M718 204l12 4 11-3M730 208v35" stroke="#2c2c2c" />

    {/* section box */}
    <g stroke="#2a2a2a">
      <path d="M683 172l-71 25v389l101 67 135-51V214l-66-42M612 197l101 66v390M713 263l135-49M746 172v40M612 586l134-49 102 65" />
      <path d="M679 240v35M746 212v325" strokeWidth="0.800" />
      <path d="M600 233l146-52 131 85M627 418l19-6M814 420l63 40" strokeDasharray="9 3 2 3" />
    </g>
    <LevelMark y={245} name="Level 1" elevation={'0"'} />
    <LevelMark y={440} name="T.O. FOOTING" elevation={`-6' - 0"`} />

    {/* pan cursor */}
    <path d="M903 347l4 4h-2.500v5.500h5.500V354l4 4-4 4v-2.500h-5.500v5.500h2.500l-4 4-4-4h2.500v-5.500H896v2.500l-4-4 4-4v2.500h5.500V351H899z" fill="#fff" stroke="#222" />
  </svg>
);

const ViewCube = () => (
  <svg width="92" height="74" viewBox="0 0 92 74" fill="none" className="absolute top-[36px] right-[17px]" aria-label="View cube">
    <ellipse cx="46" cy="45" rx="45" ry="27" fill="#f3f3f3" stroke="#c0c0c0" strokeDasharray="4 1.500" />
    <ellipse cx="46" cy="44" rx="35" ry="20" fill="#fff" stroke="#c0c0c0" />
    <ellipse cx="46" cy="49" rx="26" ry="11" fill="#ececec" />
    <g stroke="#aaa" fill="#eee"><ellipse cx="9" cy="60" rx="6" ry="3.500" /><ellipse cx="75" cy="33" rx="5" ry="3" /><path d="M67 63l10-1 3 6-9 1z" /></g>
    <path d="M23 12l26-8 21 11-27 12z" fill="#f7f7f7" stroke="#8d8d8d" />
    <path d="M23 12l20 15v29L23 43z" fill="#dfdfdf" stroke="#8d8d8d" />
    <path d="M43 27l27-12v30L43 56z" fill="#ececec" stroke="#8d8d8d" />
    <text transform="matrix(1 -.36 0 1 47 43)" fontSize="7" fill="#777" className="font-semibold">RIGHT</text>
    <text transform="matrix(.75 .6 0 1 25 29)" fontSize="6" fill="#777" className="font-semibold">FRONT</text>
    <text transform="matrix(.9 .3 -.6 .4 43 14)" fontSize="6" fill="#777" className="font-semibold">TOP</text>
  </svg>
);

const NavBar = () => (
  <div className="absolute top-[120px] right-[1px] flex h-[108px] w-[32px] flex-col items-center rounded-md border-2 border-[#b9b9b9] bg-[#f2f2f2]">
    <button aria-label="Close navigation bar" className="mt-[1px] mr-[2px] self-end"><Icon w={8} h={8}><circle cx="4" cy="4" r="3.300" stroke="#a0a0a0" /><path d="M2.500 2.500l3 3M5.500 2.500l-3 3" stroke="#999" /></Icon></button>
    <button aria-label="Steering wheel" className="mt-[8px]">
      <Icon w={22} h={22}><path d="M1 11Q1 1 11 1h9v10q0 10-9 10T1 11z" fill="#e3e7ed" stroke="#aab0ba" /><circle cx="11" cy="11" r="6" fill="#fff" stroke="#aab0ba" /><circle cx="11" cy="10" r="4" stroke="#aab0ba" /></Icon>
    </button>
    <Caret className="mt-[7px] opacity-50" />
    <span className="mt-1 h-px w-6 bg-[#bbb]" />
    <button aria-label="Zoom in region" className="mt-[6px]">
      <Icon w={16} h={17}><path d="M1 1h10v10H1z" fill="#a7d08d" stroke="#8bb575" /><circle cx="10" cy="10" r="3.500" fill="#eee" stroke="#999" /><path d="M12 12l3 4" stroke="#888" strokeWidth="1.500" /></Icon>
    </button>
    <Caret className="mt-[7px] opacity-50" />
    <button aria-label="Navigation bar options" className="mt-auto mr-[2px] mb-[2px] self-end"><Icon w={8} h={8}><circle cx="4" cy="4" r="3.300" stroke="#a0a0a0" /><path d="M2.500 3.500h3L4 5.500z" fill="#999" stroke="none" /></Icon></button>
  </div>
);

const redX = <path d="M9 7l6 7M15 7l-6 7" stroke="#d43a2f" strokeWidth="2" />;
const bulb = <><circle cx="12" cy="8" r="2.500" fill="#e3f1fd" stroke="#2f8de4" /><path d="M12 11v3" stroke="#2f8de4" /></>;

const viewControls: { label: string; icon: React.ReactNode }[] = [
  { label: 'Detail level', icon: <Icon><rect x="1" y="2" width="14" height="11" fill="#fff" /><path d="M1 5l3-3M1 9l7-7M1 13L12 2M5 13L15 3M9 13l6-6M13 13l2-2M4 2l11 11M8 2l7 7M1 6l7 7M1 10l3 3" strokeWidth="0.600" /></Icon> },
  { label: 'Visual style', icon: <Icon><path d="M1 6l4-4h10v7l-4 5H1z" fill="#5fb0ea" stroke="#27649b" /><path d="M1 6h10v8M11 6l4-4M3 10h6" stroke="#27649b" /></Icon> },
  { label: 'Sun path', icon: <Icon><circle cx="6" cy="7" r="3.500" fill="#ffd04d" stroke="#e29a1c" /><path d="M6 1v2M1 3l2 1M0 8h2M2 12l1-1M9 4l2-2" stroke="#e29a1c" />{redX}</Icon> },
  { label: 'Shadows', icon: <Icon><circle cx="6" cy="6" r="4" fill="#dcecf9" stroke="#3c87ca" /><path d="M2 13h7" />{redX}</Icon> },
  { label: 'Rendering', icon: <Icon><path d="M1 4l3 1q3-3 6 0v6q-3 3-6 0L1 6M5 2h3" />{bulb}</Icon> },
  { label: 'Crop view', icon: <Icon><path d="M1 6h9M4 2v10h8M1 12h3M11 3v6" stroke="#3477b5" strokeWidth="1.700" />{redX}</Icon> },
  { label: 'Show crop region', icon: <Icon><path d="M1 6h9M4 5v7h5M1 12h3M10 3v4" stroke="#3477b5" strokeWidth="1.700" />{bulb}</Icon> },
  { label: 'Lock 3D view', icon: <Icon><path d="M1 7l5-5 6 2 3 5v5H4V8z" fill="#dfe3e8" /><path d="M8 9h6v5H8z" fill="#7ca68f" /></Icon> },
  { label: 'Temporary hide', icon: <Icon><path d="M1 3l3 2M9 8l5-4" /><circle cx="5" cy="8" r="2.500" strokeWidth="1.400" /><circle cx="11" cy="9" r="2.500" strokeWidth="1.400" /></Icon> },
  { label: 'Reveal hidden', icon: <Icon><circle cx="8" cy="6" r="2.800" fill="#d9ecfc" stroke="#2f8de4" strokeWidth="1.500" /><path d="M8 9v4" stroke="#2f8de4" strokeWidth="1.800" /></Icon> },
  { label: 'Temporary view properties', icon: <Icon><path d="M2 3h12v10H2z" strokeDasharray="2 1" strokeWidth="1.700" /><path d="M5 6h5v3H5zM10 10l4 3" /></Icon> },
  { label: 'Analytical model', icon: <Icon><path d="M1 6l4-3h8v7l-3 3H1zM1 6h8v7M5 6v7" fill="#b9bdc4" /><circle cx="12" cy="5" r="2.600" fill="#ffb341" stroke="#e07b18" /></Icon> },
  { label: 'Displacement sets', icon: <Icon><path d="M1 7l3-2h5v6l-3 2H1zM7 5l3-3h5v7l-3 3H7z" fill="#b9bdc4" /><path d="M7 5h5v7M12 5l3-3" /></Icon> },
  { label: 'Constraints', icon: <Icon><path d="M1 3v10M15 2v5M1 4h14M3 4l2-2M3 4l2 2" /><path d="M9 10h6v4H9zM10 10V8h4v2" fill="#777" /></Icon> },
];

const ViewControlBar = () => (
  <div className="flex h-[17px] shrink-0 items-center bg-[#f0f0f0]">
    <button className="w-[73px] shrink-0 pl-[11px] text-left whitespace-nowrap text-[#222]">{`3/4" = 1'-0"`}</button>
    {viewControls.map((c) => (
      <button key={c.label} aria-label={c.label} className="flex w-[19px] shrink-0 justify-center">{c.icon}</button>
    ))}
    <button aria-label="Scroll left" className="ml-[10px]"><svg width="5" height="8" viewBox="0 0 5 8" fill="none" stroke="#333" strokeWidth="1.500" aria-hidden="true"><path d="M4 1L1 4l3 3" /></svg></button>
    <span className="mr-auto ml-[290px] h-[14px] w-[16px] bg-[#cdcdcd]" />
  </div>
);

const Watermark = () => (
  <div className="pointer-events-none absolute right-[7px] bottom-[16px] flex items-center font-['Lato','Open_Sans',sans-serif] text-[18px] leading-[18px] font-black text-white [-webkit-text-stroke:2px_#a8a8a8] [paint-order:stroke_fill]">
    Linked
    <span className="mx-[2px] flex h-[21px] items-center rounded-sm border-2 border-[#a8a8a8] bg-[#e4e4e4] px-[2px]">in</span>
    <span className="ml-[2px]">Learning</span>
  </div>
);

/* ---------- status bar ---------- */

const pick = <path d="M9 6v8l2-2 1.500 3 1.500-1-1.500-3H15z" fill="#fff" stroke="#444" strokeWidth="1" />;

const StatusBar = () => (
  <footer className="flex h-[17px] shrink-0 items-center overflow-hidden bg-[#cbcbcb] text-[#222]">
    <p className="-ml-[6px] shrink-0 whitespace-nowrap">Hold button and move mouse to Scroll the view. Hold Ctrl key</p>
    <span className="mx-[2px]"><Icon w={14} h={16} box="1 0 15 16"><path d="M1 8l4-2 4 2v5l-4 2-4-2z" fill="#9ccbee" stroke="#2f74a8" /><path d="M5 5l3-3 4 2v5" stroke="#3f9b46" strokeWidth="1.500" /><path d="M12 7h3v7h-3z" fill="#ddd" /></Icon></span>
    <select aria-label="Worksets" className="h-full w-[188px] shrink-0 appearance-none bg-white"><option> </option></select>
    <span className="-ml-[13px] opacity-40"><Chevron /></span>
    <span className="ml-[11px]"><Icon><path d="M2 3h9l-3 4v6l-2 1V7z" fill="#c9c9c9" stroke="#999" /><path d="M9 4h5l-2 4" stroke="#aaa" /></Icon></span>
    <span className="ml-[3px] w-[30px]">:0</span>
    <span><Icon><rect x="1" y="2" width="14" height="12" fill="#fff" /><path d="M1 4h14" strokeWidth="2" /><path d="M4 7h3M9 7h4M5 10h3M9 10h4M5 12h8" /></Icon></span>
    <span className="mr-[6px] ml-[8px]"><Icon><path d="M3 2h12v12H3z" fill="#b0b0b0" stroke="#999" /><path d="M1 9h6M5 7l3 3-3 3" stroke="#777" /></Icon></span>
    <div className="flex h-full w-[188px] shrink-0 items-center bg-[#f5f5f5] pr-[4px]">
      <select aria-label="Design option" disabled className="flex-1 appearance-none pl-[2px] text-[#8c8c8c] opacity-100"><option>Main Model</option></select>
      <span className="opacity-40"><Chevron /></span>
    </div>
    <div className="ml-auto flex shrink-0 items-center gap-2 pr-[57px]">
      <button aria-label="Select links"><Icon><path d="M1 4q0-2 3-2t3 2q1-2 4-2t4 2-4 2-4-2q0 2-3 2t-3-2z" fill="#f1b933" stroke="#b98310" />{pick}</Icon></button>
      <button aria-label="Select underlay elements"><Icon><path d="M1 10l7-7v7zM1 13h8" fill="#b7dbf6" stroke="#2f74a8" /><path d="M9 1l5 5M14 1L9 6" stroke="#d43a2f" strokeWidth="1.800" />{pick}</Icon></button>
      <button aria-label="Select pinned elements"><Icon><path d="M2 2h8v2L8 5v3l3 2H1l3-2V5L2 4zM6 10v5" fill="#f3a24e" stroke="#c06d1b" />{pick}</Icon></button>
      <button aria-label="Select elements by face"><Icon><path d="M2 4l5-2v11l-5 1z" fill="#9fd0f3" stroke="#2f74a8" /><path d="M7 13h3" /><path d="M9 1l5 5M14 1L9 6" stroke="#d43a2f" strokeWidth="1.800" />{pick}</Icon></button>
      <button aria-label="Drag elements on selection"><Icon><path d="M5 1v9M1 5.500h9" stroke="#222" strokeWidth="1.800" />{pick}</Icon></button>
      <span><Icon><circle cx="8" cy="8" r="5" stroke="#a0a0a0" strokeWidth="2.500" strokeDasharray="2 1.500" /></Icon></span>
      <button className="-ml-[3px] flex items-center"><Icon><path d="M1 2h14L10 8v6l-4 1V8z" fill="#a9b2be" stroke="#5c6470" /></Icon>:0</button>
    </div>
  </footer>
);

export default function App() {
  return (
    <div className="relative flex h-screen flex-col overflow-hidden bg-[#cbcbcb] font-['Open_Sans','Noto_Sans',sans-serif] text-[11px] leading-[16px] text-[#333]">
      <TitleBar />
      <RibbonTabs />
      <Ribbon />
      <div className="h-[25px] shrink-0 bg-[#efefef]" />
      <div className="flex min-h-0 flex-1 border-t-2 border-[#d2d2d2]">
        <aside className="mb-[5px] flex w-[271px] shrink-0 flex-col bg-[#f0f0f0]">
          <Properties />
          <ProjectBrowser />
        </aside>
        <div className="mb-[5px] w-[3px] shrink-0 border-x border-[#cfcfcf] bg-[#e6e6e6]" />
        <main className="relative mb-[5px] flex min-w-0 flex-1 flex-col">
          <ViewTabs />
          <div className="flex min-h-0 flex-1 bg-white">
            <div className="relative min-w-0 flex-1">
              <Model />
              <ViewCube />
              <NavBar />
            </div>
            <div className="flex w-[6px] shrink-0 flex-col bg-[#efefef]">
              <span className="mt-[238px] h-[16px] bg-[#cdcdcd]" />
            </div>
          </div>
          <ViewControlBar />
        </main>
      </div>
      <StatusBar />
      <Watermark />
    </div>
  );
}
